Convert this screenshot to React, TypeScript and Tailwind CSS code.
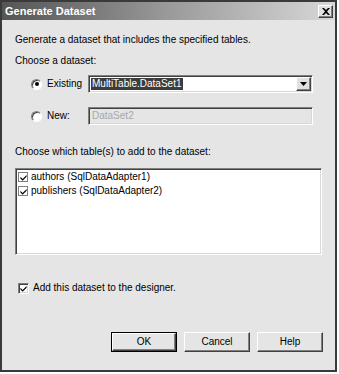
import React from "react";

const sunken =
  "border border-t-[#808080] border-l-[#808080] border-b-white border-r-white shadow-[inset_1px_1px_0_#404040,inset_-1px_-1px_0_#d8d8d8]";
const raised =
  "border border-t-white border-l-white border-b-[#404040] border-r-[#404040] shadow-[inset_-1px_-1px_0_#808080]";

const Check = ({ size = 8 }: { size?: number }) => (
  <svg width={size} height={size} viewBox="0 0 8 8">
    <path d="M0.5 3.2 L3 5.6 L7.5 1 L7.5 3.2 L3 7.6 L0.5 5.2 Z" fill="#000" />
  </svg>
);

const Radio = ({ checked }: { checked?: boolean }) => (
  <span className="relative w-[11px] h-[11px] rounded-full bg-white border border-t-[#808080] border-l-[#808080] border-b-white border-r-white shadow-[inset_1px_1px_0_#404040] flex items-center justify-center">
    {checked && <span className="w-[4px] h-[4px] rounded-full bg-black" />}
  </span>
);

const Button = ({ label, primary }: { label: string; primary?: boolean }) => (
  <div className={`w-[66px] h-[20px] ${primary ? "border border-black" : ""}`}>
    <div
      className={`w-full h-full ${raised} bg-[#e5e5e5] flex items-center justify-center text-[10px]`}
    >
      {label}
    </div>
  </div>
);

export default function App() {
  const tables = ["authors (SqlDataAdapter1)", "publishers (SqlDataAdapter2)"];
  return (
    <div className="w-[339px] h-[374px] bg-white text-black text-[10px] leading-[12px] font-['Liberation_Sans',Arial,sans-serif]">
      <div className="w-[337px] h-[372px] border-2 border-[#3a3a3a] bg-[#e5e5e5] flex flex-col">
        {/* title bar */}
        <div className="h-[18px] flex items-center justify-between pl-[3px] pr-[2px] bg-gradient-to-r from-[#555555] via-[#9a9a9a] to-[#d8d8d8]">
          <span className="text-white font-bold text-[11px]">Generate Dataset</span>
          <div className={`w-[15px] h-[13px] ${raised} bg-[#e0e0e0] flex items-center justify-center`}>
            <svg width="8" height="7" viewBox="0 0 8 7">
              <path d="M0 0h2l2 2 2-2h2L5 3.5 8 7H6L4 5 2 7H0l3-3.5z" fill="#000" />
            </svg>
          </div>
        </div>

        <div className="flex flex-col flex-1 pl-[13px] pr-[12px]">
          <p className="mt-[14px]">Generate a dataset that includes the specified tables.</p>
          <p className="mt-[9px]">Choose a dataset:</p>

          <div className="mt-[8px] h-[18px] flex items-center">
            <span className="ml-[16px]">
              <Radio checked />
            </span>
            <span className="ml-[5px] w-[41px]">Existing</span>
            <div className={`w-[225px] h-[18px] bg-white ${sunken} flex items-center justify-between pl-[2px] pr-[1px]`}>
              <span className="bg-[#3c3c3c] text-white px-[1px] leading-[12px]">MultiTable.DataSet1</span>
              <div className={`w-[15px] h-[14px] ${raised} bg-[#e0e0e0] flex items-center justify-center`}>
                <svg width="7" height="4" viewBox="0 0 7 4">
                  <path d="M0 0h7L3.5 4z" fill="#000" />
                </svg>
              </div>
            </div>
          </div>

          <div className="mt-[14px] h-[18px] flex items-center">
            <span className="ml-[16px]">
              <Radio />
            </span>
            <span className="ml-[5px] w-[41px]">New:</span>
            <div className={`w-[225px] h-[18px] bg-[#e5e5e5] ${sunken} flex items-center pl-[3px] text-[#a8a8a8]`}>
              DataSet2
            </div>
          </div>

          <p className="mt-[21px]">Choose which table(s) to add to the dataset:</p>

          <div className={`mt-[10px] w-[307px] h-[87px] bg-white ${sunken} pt-[1px]`}>
            {tables.map((t) => (
              <div key={t} className="h-[14px] flex items-center pl-[2px]">
                <span className="w-[10px] h-[10px] border border-[#808080] bg-white flex items-center justify-center">
                  <Check size={7} />
                </span>
                <span className="ml-[3px]">{t}</span>
              </div>
            ))}
          </div>

          <div className="mt-[27px] h-[12px] flex items-center pl-[3px]">
            <span className={`w-[11px] h-[11px] bg-white ${sunken} flex items-center justify-center`}>
              <Check size={7} />
            </span>
            <span className="ml-[4px]">Add this dataset to the designer.</span>
          </div>

          <div className="mt-[38px] flex justify-end gap-[7px]">
            <Button label="OK" primary />
            <Button label="Cancel" />
            <Button label="Help" />
          </div>
        </div>
      </div>
    </div>
  );
}
